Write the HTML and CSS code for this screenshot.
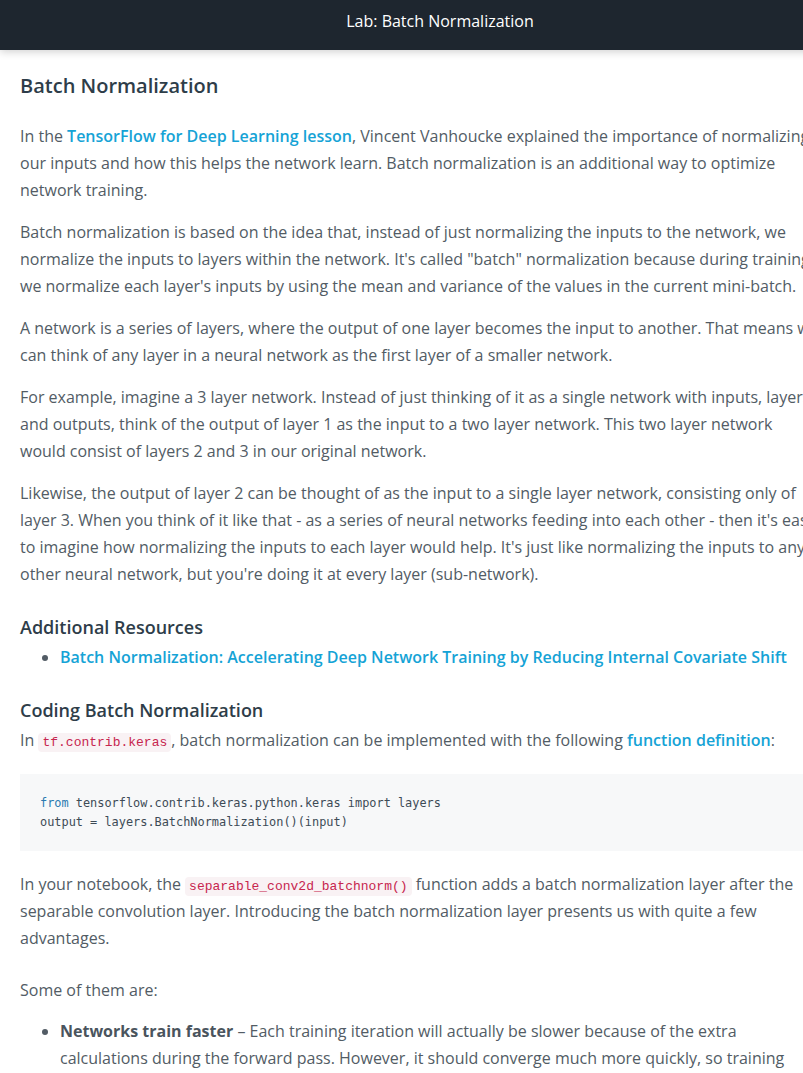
FILE: index.html
```html
<!DOCTYPE html>
<html lang="en">
<head>
<meta charset="utf-8">
<title>Lab: Batch Normalization</title>
<link rel="stylesheet" href="styles.css">
</head>
<body>
<div class="page">
  <header class="topbar">
    <div class="topbar-title">Lab: Batch Normalization</div>
  </header>
  <main class="content">
    <h1 class="title">Batch Normalization</h1>
    <p>In the <a href="#">TensorFlow for Deep Learning lesson</a>, Vincent Vanhoucke explained the importance of normalizing our inputs and how this helps the network learn. Batch normalization is an additional way to optimize network training.</p>
    <p>Batch normalization is based on the idea that, instead of just normalizing the inputs to the network, we normalize the inputs to layers within the network. It's called "batch" normalization because during training, we normalize each layer's inputs by using the mean and variance of the values in the current mini-batch.</p>
    <p>A network is a series of layers, where the output of one layer becomes the input to another. That means we can think of any layer in a neural network as the first layer of a smaller network.</p>
    <p>For example, imagine a 3 layer network. Instead of just thinking of it as a single network with inputs, layers, and outputs, think of the output of layer 1 as the input to a two layer network. This two layer network would consist of layers 2 and 3 in our original network.</p>
    <p>Likewise, the output of layer 2 can be thought of as the input to a single layer network, consisting only of layer 3. When you think of it like that - as a series of neural networks feeding into each other - then it's easy to imagine how normalizing the inputs to each layer would help. It's just like normalizing the inputs to any other neural network, but you're doing it at every layer (sub-network).</p>
    <h3 class="section">Additional Resources</h3>
    <ul class="links">
      <li><a href="#">Batch Normalization: Accelerating Deep Network Training by Reducing Internal Covariate Shift</a></li>
    </ul>
    <h3 class="section">Coding Batch Normalization</h3>
    <p>In <code class="inline">tf.contrib.keras</code>, batch normalization can be implemented with the following <a href="#">function definition</a>:</p>
    <pre class="codeblock"><code><span class="kw">from</span> tensorflow.contrib.keras.python.keras import layers
output = layers.BatchNormalization()(input)</code></pre>
    <p class="notebook">In your notebook, the <code class="inline">separable_conv2d_batchnorm()</code> function adds a batch normalization layer after the separable convolution layer. Introducing the batch normalization layer presents us with quite a few advantages.</p>
    <p class="some">Some of them are:</p>
    <ul class="bullets">
      <li><strong>Networks train faster</strong> – Each training iteration will actually be slower because of the extra calculations during the forward pass. However, it should converge much more quickly, so training should be faster overall.</li>
    </ul>
  </main>
</div>
</body>
</html>
```
FILE: styles.css
```css
html, body {
  margin: 0;
  padding: 0;
  background: #ffffff;
  overflow: hidden;
}

.page {
  width: 880px;
  font-family: "Open Sans", "Liberation Sans", sans-serif;
  color: #525c65;
  font-size: 16px;
  line-height: 27px;
}

.topbar {
  height: 50px;
  background: #1e262f;
  display: flex;
  align-items: center;
  justify-content: center;
  box-shadow: 0 2px 8px rgba(0, 0, 0, 0.18);
  position: relative;
  z-index: 1;
}

.topbar-title {
  color: #ffffff;
  font-size: 16px;
  line-height: 20px;
  padding-bottom: 8px;
}

.content {
  padding: 21px 61px 20px 20px;
}

.title {
  margin: 0 0 22px;
  font-size: 20px;
  line-height: 30px;
  font-weight: 600;
  color: #2e3d49;
}

p {
  margin: 0 0 15px;
}

a {
  color: #15a3d6;
  text-decoration: none;
  font-weight: 600;
}

.section {
  margin: 26px 0 3px;
  font-size: 18px;
  line-height: 27px;
  font-weight: 600;
  color: #2e3d49;
}

.links {
  margin: 0;
  padding-left: 40px;
}

.inline {
  font-family: "Liberation Mono", "DejaVu Sans Mono", monospace;
  font-size: 13px;
  line-height: 1;
  color: #c7254e;
  background: #f9f2f4;
  padding: 2px 4px;
  border-radius: 4px;
}

.codeblock {
  margin: 20px 0 20px;
  padding: 20px 20px 19px;
  background: #f7f8f9;
  font-family: "Liberation Mono", "DejaVu Sans Mono", monospace;
  font-size: 11.9px;
  line-height: 18px;
  color: #3d4b56;
}

.codeblock .kw {
  color: #2a7ab0;
}

.notebook {
  margin-bottom: 25px;
}

.some {
  margin-bottom: 14px;
}

.bullets {
  margin: 0;
  padding-left: 40px;
}

strong {
  font-weight: 700;
  color: #4a545d;
}
```
